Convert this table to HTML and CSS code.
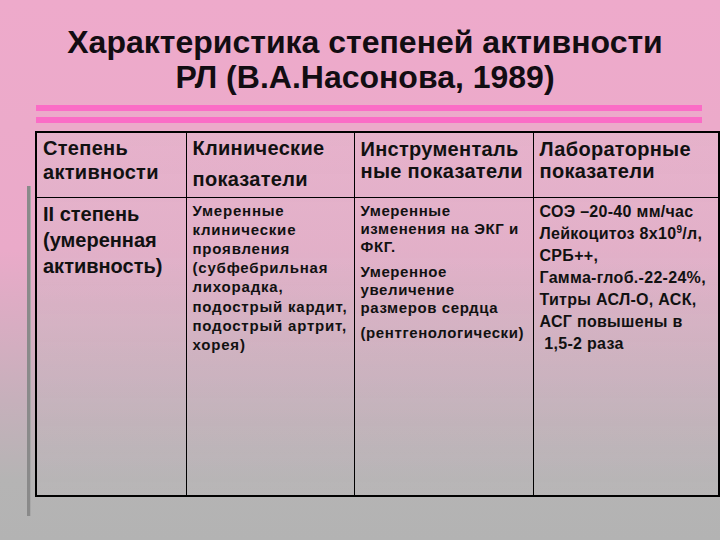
FILE: index.html
```html
<!DOCTYPE html>
<html lang="ru">
<head>
<meta charset="utf-8">
<title>Характеристика степеней активности РЛ</title>
<link rel="stylesheet" href="styles.css">
</head>
<body>
<div class="slide">
  <h1 class="title">Характеристика степеней активности<br>РЛ (В.А.Насонова, 1989)</h1>
  <div class="bars">
    <div class="bar"></div>
    <div class="bar"></div>
  </div>
  <div class="content">
    <div class="side-bar"></div>
    <table class="grid">
      <colgroup>
        <col class="c1"><col class="c2"><col class="c3"><col class="c4">
      </colgroup>
      <tr class="head">
        <td><div class="h1t">Степень<br>активности</div></td>
        <td><div class="h2t">Клинические<br>показатели</div></td>
        <td><div class="h3t">Инструменталь<br>ные показатели</div></td>
        <td><div class="h3t">Лабораторные<br>показатели</div></td>
      </tr>
      <tr class="body">
        <td><div class="b1">II степень<br>(умеренная<br>активность)</div></td>
        <td><div class="b2">Умеренные<br>клинические<br>проявления<br>(субфебрильная<br>лихорадка,<br>подострый кардит,<br>подострый артрит,<br>хорея)</div></td>
        <td><div class="b3">
          <p>Умеренные<br>изменения на ЭКГ и<br>ФКГ.</p>
          <p>Умеренное<br>увеличение<br>размеров сердца</p>
          <p>(рентгенологически)</p>
        </div></td>
        <td><div class="b4">СОЭ –20-40 мм/час<br>Лейкоцитоз 8х10<sup>9</sup>/л,<br>СРБ++,<br>Гамма-глоб.-22-24%,<br>Титры АСЛ-О, АСК,<br>АСГ повышены в<br>&nbsp;1,5-2 раза</div></td>
      </tr>
    </table>
  </div>
</div>
</body>
</html>
```
FILE: styles.css
```css
html, body {
  margin: 0;
  padding: 0;
}
body {
  width: 720px;
  height: 540px;
  overflow: hidden;
  font-family: "Liberation Sans", Arial, sans-serif;
  color: #111;
  background: linear-gradient(to bottom, #eeaacb 0px, #eaaac9 250px, #c6b0bb 400px, #b5b4b4 480px, #b3b3b3 540px);
}
.slide {
  display: flex;
  flex-direction: column;
  height: 540px;
}
.title {
  margin: 0;
  padding: 25px 0 0 10px;
  font-size: 32px;
  line-height: 35px;
  font-weight: bold;
  text-align: center;
  color: #120d12;
}
.bars {
  margin: 10px 0 0 36px;
  width: 666px;
  display: flex;
  flex-direction: column;
  gap: 6px;
}
.bar {
  height: 6px;
  background: #fb6cc6;
}
.content {
  display: flex;
  margin-top: 8px;
}
.side-bar {
  width: 5px;
  height: 330px;
  margin: 55px 4px 0 27px;
  background: #8a8a8a;
  border-right: 1px solid #a8a8a8;
}
.grid {
  border-collapse: collapse;
  width: 683px;
  height: 366px;
  border: 2px solid #000;
  background: linear-gradient(to bottom, rgba(215,195,205,0.3), rgba(190,185,188,0.25));
  table-layout: fixed;
}
.grid td {
  border: 1px solid #000;
  vertical-align: top;
  padding: 0 2px 0 6px;
  font-weight: bold;
  white-space: nowrap;
}
.c1 { width: 150px; }
.c2 { width: 168px; }
.c3 { width: 179px; }
.c4 { width: 186px; }
.head { height: 65px; }
.h1t, .h2t, .h3t {
  font-size: 20px;
  letter-spacing: 0.3px;
}
.h1t {
  line-height: 24px;
  padding-top: 3px;
}
.h2t {
  line-height: 31px;
  padding-top: 0;
}
.h3t {
  line-height: 22px;
  padding-top: 5px;
}
.b1 {
  font-size: 20px;
  line-height: 26px;
  padding-top: 3px;
}
.b2 {
  font-size: 15px;
  letter-spacing: 0.8px;
  line-height: 19.2px;
  padding-top: 3px;
}
.b3 {
  font-size: 15px;
  letter-spacing: 0.6px;
  line-height: 18px;
  padding-top: 4px;
}
.b3 p {
  margin: 0 0 7px 0;
}
.b4 {
  font-size: 16px;
  letter-spacing: 0.3px;
  line-height: 22px;
  padding-top: 3px;
}
.b4 sup {
  font-size: 10px;
  line-height: 0;
}
```
